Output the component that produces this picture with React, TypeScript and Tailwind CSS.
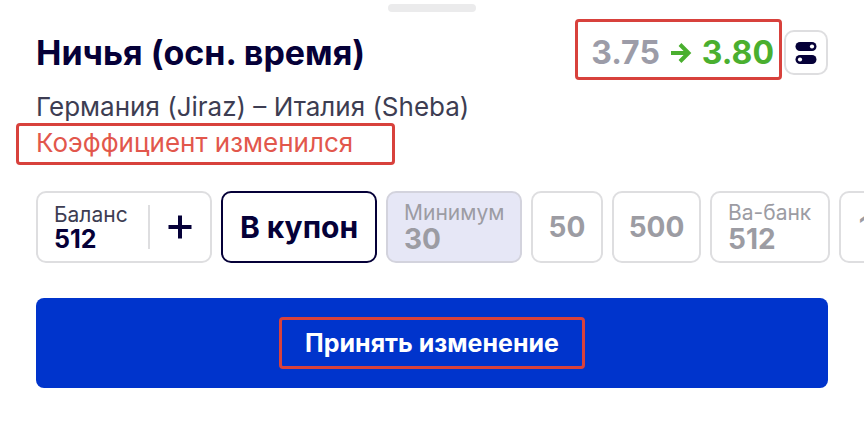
import React from 'react'
import clsx from 'clsx'

const stakes = [
    { label: 'Минимум', value: '30', width: 'w-[136px]', active: true },
    { value: '50', width: 'w-[72px]' },
    { value: '500', width: 'w-[89px]' },
    { label: 'Ва-банк', value: '512', width: 'w-[120px]' },
    { value: '1000', width: 'w-[108px]' },
]

function Highlight({ className }: { className: string }) {
    return <span aria-hidden="true" className={clsx('pointer-events-none absolute rounded-[4px] border-3 border-[#d8413c]', className)} />
}

function ArrowIcon() {
    return (
        <svg className='h-[22px] w-[22px]' viewBox="0 0 22 22" fill="none" stroke="currentColor" strokeWidth="4" aria-hidden="true">
            <path d="M1 11h17M10 2.5 18.5 11 10 19.5" />
        </svg>
    )
}

function TogglesIcon() {
    return (
        <svg className='h-[24px] w-[22px]' viewBox="0 0 22 24" aria-hidden="true">
            <rect x="0.5" y="1" width="21" height="9" rx="4.5" fill="#050038" />
            <circle cx="17" cy="5.5" r="2.1" fill="#fff" />
            <rect x="0.5" y="14" width="21" height="9" rx="4.5" fill="#050038" />
            <circle cx="5" cy="18.5" r="2.1" fill="#fff" />
        </svg>
    )
}

function PlusIcon() {
    return (
        <svg className='h-6 w-6' viewBox="0 0 24 24" stroke="currentColor" strokeWidth="4" aria-hidden="true">
            <path d="M12 0.5v23M0.5 12h23" />
        </svg>
    )
}

function Header() {
    return (
        <div className='flex h-[45px] items-center'>
            <h1 className='text-[34px] leading-11 font-bold text-[#050038]'>Ничья (осн. время)</h1>
            <div className='relative ms-auto me-[2px] flex h-[61px] items-center gap-[10px] ps-4 pe-2 text-[32px] leading-11 font-bold'>
                <span className='text-[#9c9ca8]'>3.75</span>
                <span className='text-[#4aaf2f]'><ArrowIcon /></span>
                <span className='text-[#4aaf2f]'>3.80</span>
                <Highlight className='inset-x-0 -top-[3px] h-[61px]' />
            </div>
            <button aria-label="Настройки" className='flex h-[45px] w-11 items-center justify-center rounded-[10px] border-2 border-[#dedee0]'>
                <TogglesIcon />
            </button>
        </div>
    )
}

function StakeRow() {
    return (
        <div className='mt-[30px] flex h-[72px] gap-[9px] overflow-hidden ps-9'>
            <div className='flex w-[176px] shrink-0 items-center rounded-[10px] border-2 border-[#dedee0] ps-4'>
                <div className='text-[#3d3d52]'>
                    <p className='text-[21px] leading-6'>Баланс</p>
                    <p className='text-[25px] leading-6 font-bold text-[#050038]'>512</p>
                </div>
                <button aria-label="Пополнить" className='ms-auto flex h-11 w-[62px] items-center justify-center border-s-2 border-[#dedee0] text-[#050038]'>
                    <PlusIcon />
                </button>
            </div>
            <button className='w-[156px] shrink-0 rounded-[10px] border-2 border-[#050038] text-[30px] font-bold text-[#050038]'>
                В купон
            </button>
            {stakes.map((stake) => (
                <button
                    key={stake.value}
                    className={clsx(
                        'shrink-0 rounded-[10px] border-2 font-bold text-[#9c9ca3]',
                        stake.width,
                        stake.label ? 'px-4 text-left' : 'text-center',
                        stake.active ? 'border-[#d3d3dd] bg-[#e6e7f6]' : 'border-[#dedee0]'
                    )}
                >
                    {stake.label ? <span className='block text-[21px] leading-6 font-normal'>{stake.label}</span> : ''}
                    <span className='block text-[28px] leading-7'>{stake.value}</span>
                </button>
            ))}
        </div>
    )
}

function App() {
    return (
        <main className='bg-white pt-1 pb-12 font-[Inter,sans-serif]'>
            <div className='mx-auto h-2 w-[88px] rounded-[4px] bg-[#ebebec]' />
            <div className='mt-[18px] px-9'>
                <Header />
                <div className='mt-[14px] text-[26px] leading-9'>
                    <p className='text-[#3d3d52]'>Германия (Jiraz) – Италия (Sheba)</p>
                    <p className='relative w-[340px] text-[#e2574c]'>
                        Коэффициент изменился
                        <Highlight className='-top-[2px] -left-5 h-[42px] w-[379px]' />
                    </p>
                </div>
            </div>
            <StakeRow />
            <div className='mt-[35px] px-9'>
                <button className='flex h-[90px] w-full items-center justify-center rounded-[8px] bg-[#0034cc] text-[25px] leading-9 font-bold text-white'>
                    <span className='relative'>
                        Принять изменение
                        <Highlight className='-inset-x-[26px] -inset-y-2' />
                    </span>
                </button>
            </div>
        </main>
    )
}

export default App
